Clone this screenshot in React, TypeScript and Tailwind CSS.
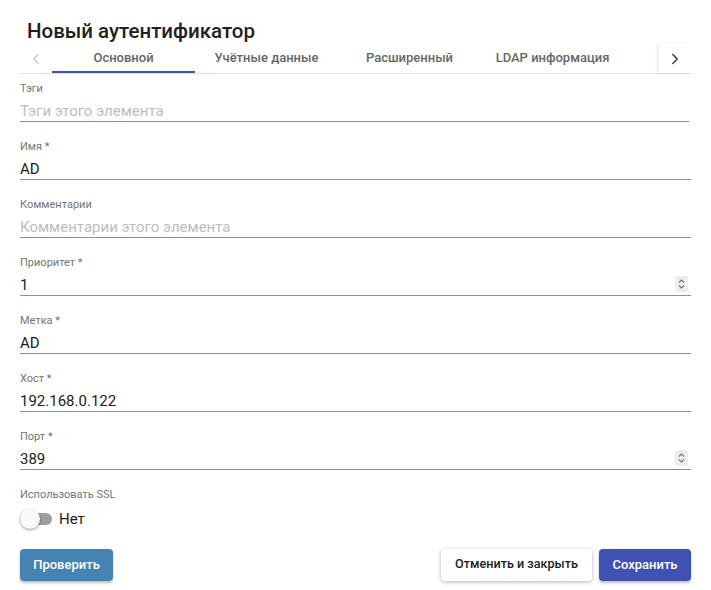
import { ChevronLeft, ChevronRight } from 'lucide-react';

const tabs = ['Основной', 'Учётные данные', 'Расширенный', 'LDAP информация'];

interface FieldProps {
  label: string;
  value?: string;
  placeholder?: string;
  spinner?: boolean;
}

function Spinner() {
  return (
    <div className="w-[13px] h-[16px] bg-[#ececf1] rounded-[2px] flex items-center justify-center">
      <svg width="9" height="12" viewBox="0 0 9 12" fill="none" stroke="#777" strokeWidth="1.2">
        <path d="M2 4.5 L4.5 2 L7 4.5" />
        <path d="M2 7.5 L4.5 10 L7 7.5" />
      </svg>
    </div>
  );
}

function Field({ label, value, placeholder, spinner }: FieldProps) {
  return (
    <div className="mb-[18px]">
      <div className="text-[11px] leading-[14px] text-[#757575]">{label}</div>
      <div className="h-[26px] pt-1 border-b border-[#8f8f8f] flex items-start justify-between">
        {value ? (
          <span className="text-[15px] leading-[22px] text-[#212121]">{value}</span>
        ) : (
          <span className="text-[15px] leading-[22px] text-[#bdbdbd]">{placeholder}</span>
        )}
        {spinner && (
          <div className="mr-[3px] mt-[2px]">
            <Spinner />
          </div>
        )}
      </div>
    </div>
  );
}

export default function App() {
  return (
    <div className="w-[711px] h-[590px] bg-white px-5 pt-[19px] font-['Roboto',sans-serif] overflow-hidden">
      <h1 className="pl-[7px] text-[20.5px] leading-[24px] font-medium text-[#212121]">Новый аутентификатор</h1>

      <div className="mt-[1px] h-[30px] flex border-b border-[#e0e0e0]">
        <div className="w-8 flex items-center justify-center text-[#c4c4c4]">
          <ChevronLeft size={18} strokeWidth={1.5} />
        </div>
        <div className="flex-1 flex overflow-hidden">
          {tabs.map((t, i) => (
            <div
              key={t}
              className={`w-[143px] shrink-0 flex items-center justify-center text-[13px] font-medium text-[#666] border-b-2 ${
                i === 0 ? 'border-[#3f51b5]' : 'border-transparent'
              }`}
            >
              {t}
            </div>
          ))}
        </div>
        <div className="w-8 flex items-center justify-center text-[#333] shadow-[-2px_0_3px_rgba(0,0,0,0.08)] bg-white">
          <ChevronRight size={18} strokeWidth={1.8} />
        </div>
      </div>

      <div className="mt-[8px]">
        <div className="mr-[2px]">
          <Field label="Тэги" placeholder="Тэги этого элемента" />
        </div>
        <Field label="Имя *" value="AD" />
        <Field label="Комментарии" placeholder="Комментарии этого элемента" />
        <Field label="Приоритет *" value="1" spinner />
        <Field label="Метка *" value="AD" />
        <Field label="Хост *" value="192.168.0.122" />
        <Field label="Порт *" value="389" spinner />

        <div className="text-[11px] leading-[14px] text-[#757575]">Использовать SSL</div>
        <div className="mt-[6px] flex items-center gap-[7px]">
          <div className="relative w-8 h-[20px] flex items-center">
            <div className="w-8 h-[12px] rounded-full bg-[#9e9e9e]" />
            <div className="absolute left-0 top-0 w-[20px] h-[20px] rounded-full bg-[#fafafa] shadow-[0_1px_3px_rgba(0,0,0,0.4)]" />
          </div>
          <span className="text-[15px] text-[#212121]">Нет</span>
        </div>
      </div>

      <div className="mt-[18px] flex items-center">
        <button className="h-8 w-[93px] rounded bg-[#4682b4] text-white text-[13px] font-medium shadow-[0_2px_3px_rgba(0,0,0,0.25)]">
          Проверить
        </button>
        <div className="flex-1" />
        <button className="h-8 w-[151px] rounded bg-white text-[#212121] text-[12.6px] font-medium shadow-[0_1px_4px_rgba(0,0,0,0.3)]">
          Отменить и закрыть
        </button>
        <button className="ml-[7px] h-8 w-[92px] rounded bg-[#3f51b5] text-white text-[13px] font-medium shadow-[0_2px_3px_rgba(0,0,0,0.25)]">
          Сохранить
        </button>
      </div>
    </div>
  );
}
